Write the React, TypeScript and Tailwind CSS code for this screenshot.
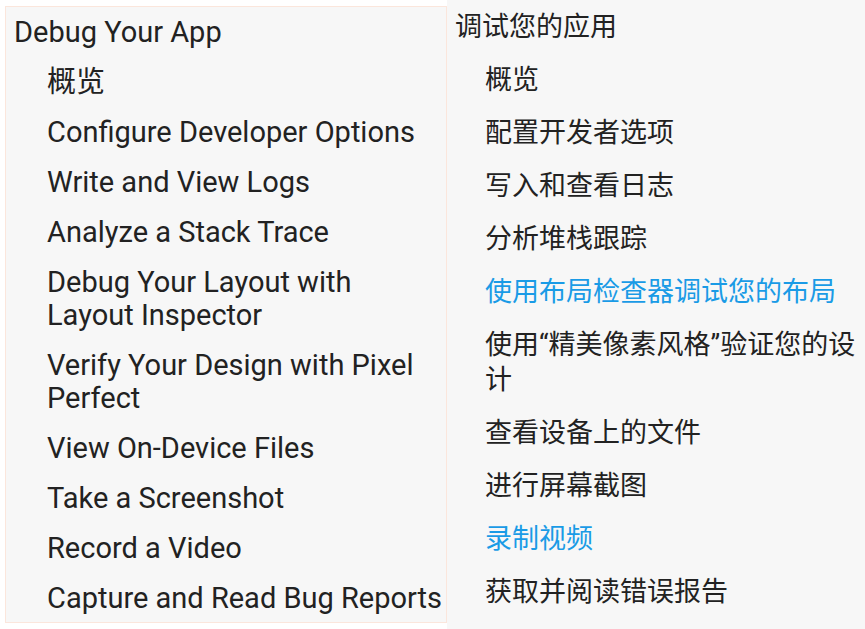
import React from "react";

const leftItems: { text: string }[] = [
  { text: "概览" },
  { text: "Configure Developer Options" },
  { text: "Write and View Logs" },
  { text: "Analyze a Stack Trace" },
  { text: "Debug Your Layout with Layout Inspector" },
  { text: "Verify Your Design with Pixel Perfect" },
  { text: "View On-Device Files" },
  { text: "Take a Screenshot" },
  { text: "Record a Video" },
  { text: "Capture and Read Bug Reports" },
];

const rightItems: { text: string; blue?: boolean }[] = [
  { text: "概览" },
  { text: "配置开发者选项" },
  { text: "写入和查看日志" },
  { text: "分析堆栈跟踪" },
  { text: "使用布局检查器调试您的布局", blue: true },
  { text: "使用“精美像素风格”验证您的设计" },
  { text: "查看设备上的文件" },
  { text: "进行屏幕截图" },
  { text: "录制视频", blue: true },
  { text: "获取并阅读错误报告" },
];

export default function App() {
  return (
    <div
      className="flex w-[865px] h-[629px] bg-white overflow-hidden text-[#222222]"
      style={{ fontFamily: 'Roboto, "Noto Sans CJK SC", sans-serif' }}
    >
      <div className="w-[447px] shrink-0 pt-[6px] pl-[5px]">
        <div className="w-[442px] h-[617px] border border-[#fbe6dc] bg-[#f7f7f7] pt-[9px] pl-[8px] pr-[2px] flex flex-col gap-[17px] text-[29px] leading-[33px]">
          <div>Debug Your App</div>
          {leftItems.map((it) => (
            <div key={it.text} className="pl-[33px]">
              {it.text}
            </div>
          ))}
        </div>
      </div>
      <div className="flex-1 bg-[#f7f7f7] pt-[10px] pl-[8px] pr-[6px] flex flex-col gap-[18px] text-[27px] leading-[35px]">
        <div>调试您的应用</div>
        {rightItems.map((it) => (
          <div
            key={it.text}
            className={"pl-[30px] " + (it.blue ? "text-[#1a9be6]" : "")}
          >
            {it.text}
          </div>
        ))}
      </div>
    </div>
  );
}
